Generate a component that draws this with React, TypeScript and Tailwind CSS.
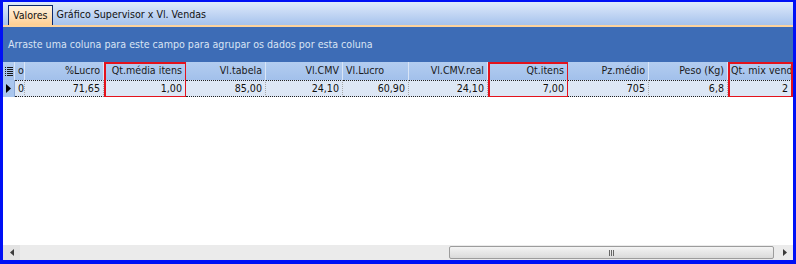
import React from "react";

interface Column {
  title: string;
  value: string;
  width: number;
  head: "left" | "right";
  marked?: boolean;
}

const columns: Column[] = [
  { title: "o", value: "0", width: 10, head: "left" },
  { title: "%Lucro", value: "71,65", width: 79, head: "right" },
  { title: "Qt.média itens", value: "1,00", width: 82, head: "right", marked: true },
  { title: "Vl.tabela", value: "85,00", width: 80, head: "right" },
  { title: "Vl.CMV", value: "24,10", width: 77, head: "right" },
  { title: "Vl.Lucro", value: "60,90", width: 66, head: "left" },
  { title: "Vl.CMV.real", value: "24,10", width: 79, head: "right" },
  { title: "Qt.itens", value: "7,00", width: 80, head: "right", marked: true },
  { title: "Pz.médio", value: "705", width: 81, head: "right" },
  { title: "Peso (Kg)", value: "6,8", width: 79, head: "right" },
  { title: "Qt. mix vend", value: "2", width: 64, head: "left", marked: true },
];

function GridColumn({ col }: { col: Column }) {
  const headCls = col.head === "right" ? "justify-end" : "justify-start";
  const cellCls = col.title === "o" ? "justify-start" : "justify-end";
  return (
    <div className="relative flex shrink-0 flex-col" style={{ width: col.width }}>
      <div
        className={`flex h-[18px] items-center overflow-hidden whitespace-nowrap border-r border-r-[#d9e5f6] bg-gradient-to-b from-[#b3cdf0] to-[#a2c0eb] px-[3px] text-[#1a1a1a] ${headCls}`}
      >
        {col.title}
      </div>
      <div
        className={`flex h-[17px] items-center overflow-hidden whitespace-nowrap border-y border-dotted border-y-[#222] border-r border-r-[#a7a7a7] bg-[#dde7f5] px-[3px] text-[#111] ${cellCls}`}
      >
        {col.value}
      </div>
      {col.marked ? (
        <div className="pointer-events-none absolute top-0 bottom-[-1px] left-0 right-[-1px] border-2 border-[#e3121c]" />
      ) : null}
    </div>
  );
}

export default function App() {
  return (
    <div
      className="flex h-[264px] w-[796px] flex-col overflow-hidden border-t-2 border-l-[3px] border-r-[3px] border-b-4 border-[#0010f5] bg-white text-[10.6px]"
      style={{ fontFamily: '"DejaVu Sans Condensed", "DejaVu Sans", Tahoma, sans-serif', fontStretch: "semi-condensed" }}
    >
      {/* tab strip */}
      <div className="flex h-[23px] items-end bg-gradient-to-b from-[#dfeafb] to-[#a7c3ec] pl-[5px]">
        <div className="flex h-[20px] items-center border border-b-0 border-[#0c2a6e] bg-gradient-to-b from-[#fff4e2] to-[#ffcf92] px-[4px] text-[#111]">
          Valores
        </div>
        <div className="flex h-[20px] items-center px-[4px] text-[#111]">Gráfico Supervisor x Vl. Vendas</div>
      </div>
      <div className="h-[2px] bg-[#fdd39c]" />

      {/* group panel */}
      <div className="flex h-[35px] items-center bg-[#3d6cb6] pl-[5px] text-[#d9e4f4]">
        Arraste uma coluna para este campo para agrupar os dados por esta coluna
      </div>

      {/* grid */}
      <div className="flex flex-1 flex-col overflow-hidden">
        <div className="flex overflow-hidden">
          <div className="flex w-[12px] shrink-0 flex-col">
            <div className="flex h-[18px] items-center justify-center border-r border-r-[#d9e5f6] bg-gradient-to-b from-[#b3cdf0] to-[#a2c0eb]">
              <svg width="8" height="9" viewBox="0 0 8 9">
                <g fill="#1a1a1a">
                  <rect x="0" y="0" width="1" height="1" />
                  <rect x="2" y="0" width="6" height="1" />
                  <rect x="0" y="2" width="1" height="1" />
                  <rect x="2" y="2" width="6" height="1" />
                  <rect x="0" y="4" width="1" height="1" />
                  <rect x="2" y="4" width="6" height="1" />
                  <rect x="0" y="6" width="1" height="1" />
                  <rect x="2" y="6" width="6" height="1" />
                  <rect x="0" y="8" width="1" height="1" />
                  <rect x="2" y="8" width="6" height="1" />
                </g>
              </svg>
            </div>
            <div className="flex h-[17px] items-center justify-center border-r border-r-[#8aa9d6] bg-[#a9c6ee]">
              <svg width="5" height="9" viewBox="0 0 5 9">
                <path d="M0 0 L5 4.5 L0 9 Z" fill="#000" />
              </svg>
            </div>
          </div>
          {columns.map((c) => (
            <GridColumn key={c.title} col={c} />
          ))}
        </div>
        <div className="flex-1 bg-white" />
      </div>

      {/* horizontal scrollbar */}
      <div className="flex h-[15px] items-center bg-[#ebebeb]">
        <div className="flex h-full w-[17px] items-center justify-center bg-[#e3e3e3]">
          <svg width="4" height="7" viewBox="0 0 4 7">
            <path d="M4 0 L0 3.5 L4 7 Z" fill="#3a3a3a" />
          </svg>
        </div>
        <div className="flex h-full flex-1 items-center pl-[429px] pr-[2px]">
          <div className="flex h-[13px] w-[325px] items-center justify-center rounded-[2px] border border-[#9c9c9c] bg-gradient-to-b from-[#f4f4f4] to-[#dadada]">
            <span className="flex gap-[1px]">
              <span className="h-[6px] w-[1px] bg-[#666]" />
              <span className="h-[6px] w-[1px] bg-[#666]" />
              <span className="h-[6px] w-[1px] bg-[#666]" />
            </span>
          </div>
        </div>
        <div className="flex h-full w-[17px] items-center justify-center">
          <svg width="4" height="7" viewBox="0 0 4 7">
            <path d="M0 0 L4 3.5 L0 7 Z" fill="#3a3a3a" />
          </svg>
        </div>
      </div>
    </div>
  );
}
